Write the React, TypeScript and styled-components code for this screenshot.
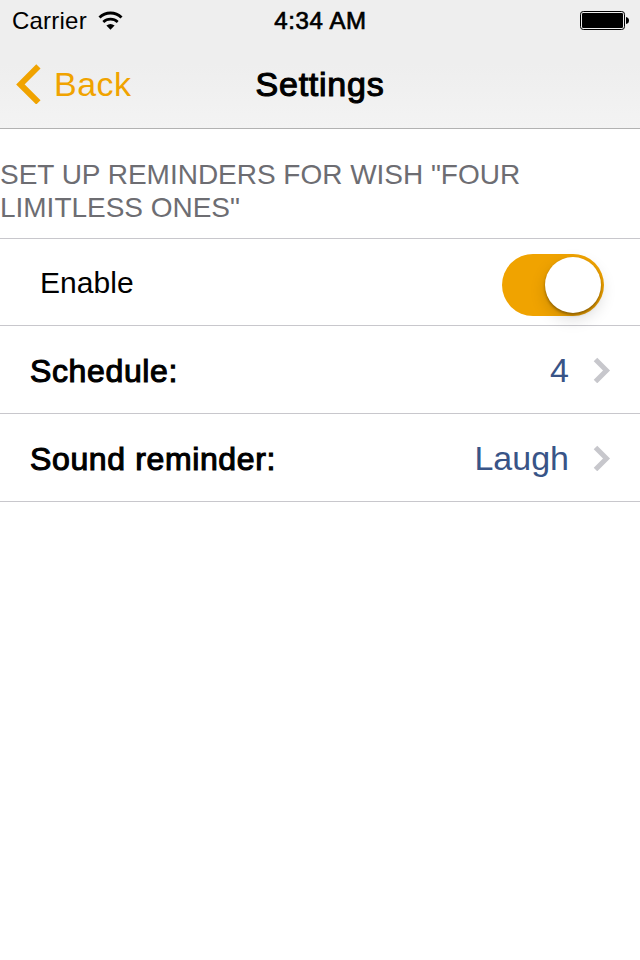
import React from "react";
import styled, { createGlobalStyle } from "styled-components";

const GlobalStyle = createGlobalStyle`
  * { box-sizing: border-box; }
  body {
    margin: 0;
    background: #fff;
    color: #000;
    font-family: "Liberation Sans", Arial, sans-serif;
  }
`;

const Screen = styled.main`
  width: 640px;
  height: 960px;
  background: #fff;
  overflow: hidden;
`;

const Header = styled.header`
  height: 129px;
  background: linear-gradient(#eeeeee 0%, #eeeeee 50%, #f3f3f3 100%);
  border-bottom: 1px solid #b2b2b2;
`;

const StatusBar = styled.div`
  display: grid;
  grid-template-columns: 1fr auto 1fr;
  align-items: center;
  height: 40px;
  padding: 1px 11px 0 12px;
  font-size: 24px;
  line-height: 40px;
`;

const Carrier = styled.div`
  display: flex;
  align-items: center;
  gap: 11px;
  letter-spacing: 0.22px;
`;

const Time = styled.time`
  letter-spacing: 0.6px;
  -webkit-text-stroke: 0.7px #000;
`;

const BatterySlot = styled.div`
  display: flex;
  justify-content: flex-end;
  padding-bottom: 2px;
`;

const NavBar = styled.nav`
  display: grid;
  grid-template-columns: 1fr auto 1fr;
  align-items: center;
  height: 88px;
  padding: 0 16px;
  font-size: 34px;
  line-height: 40px;
`;

const BackButton = styled.button`
  display: flex;
  align-items: center;
  gap: 13px;
  padding: 0;
  border: 0;
  background: none;
  color: #f0a300;
  font: inherit;
  letter-spacing: 0.45px;
`;

const Title = styled.h1`
  margin: 0;
  font: inherit;
  letter-spacing: 0.75px;
  -webkit-text-stroke: 1.1px #000;
`;

const SectionHeader = styled.h2`
  height: 110px;
  margin: 0;
  padding-top: 29px;
  border-bottom: 1px solid #c8c7cc;
  color: #6d6d72;
  font-size: 28px;
  font-weight: 400;
  line-height: 33px;
  letter-spacing: -0.02px;
  text-transform: uppercase;
`;

const Row = styled.div<{ $height: number }>`
  display: flex;
  align-items: center;
  justify-content: space-between;
  height: ${({ $height }) => $height}px;
  padding: 0 30px;
  border-bottom: 1px solid #c8c7cc;
`;

const OptionRow = styled(Row)`
  padding-right: 29px;
`;

const SwitchRow = styled(Row)`
  padding: 5px 36px 0 40px;
`;

const SwitchLabel = styled.span`
  margin-top: -3px;
  font-size: 30px;
  letter-spacing: 0.05px;
`;

const RowLabel = styled.span`
  padding-top: 3px;
  font-size: 32px;
  letter-spacing: 0.63px;
  -webkit-text-stroke: 1.1px #000;
`;

const RowValue = styled.span`
  display: flex;
  align-items: center;
  gap: 24px;
  padding-top: 1px;
  color: #385487;
  font-size: 34px;
`;

const Switch = styled.button`
  display: flex;
  justify-content: flex-end;
  width: 102px;
  height: 62px;
  padding: 3px;
  border: 0;
  border-radius: 31px;
  background: #f0a300;
`;

const Knob = styled.span`
  width: 56px;
  height: 56px;
  border-radius: 50%;
  background: #fff;
  box-shadow: 0 6px 16px rgba(0, 0, 0, 0.15), 0 2px 3px rgba(0, 0, 0, 0.35);
`;

const WifiIcon = () => (
  <svg width="25" height="20" viewBox="0 0 25 20" aria-hidden="true">
    <path d="M1.5 6.5A16 16 0 0 1 23.5 6.5" fill="none" stroke="#000" strokeWidth="3" />
    <path d="M5.3 10.9A10.6 10.6 0 0 1 19.7 10.9" fill="none" stroke="#000" strokeWidth="2.7" />
    <path d="M8.4 14.6Q12.5 11.2 16.6 14.6L12.5 18.7Z" />
  </svg>
);

const BatteryIcon = () => (
  <svg width="49" height="19" viewBox="0 0 49 19" aria-hidden="true">
    <rect x="0.5" y="0.5" width="44" height="18" rx="2.8" fill="none" stroke="#000" />
    <rect x="2" y="2" width="41" height="15" rx="1.2" />
    <path d="M46 6Q49 6.5 49 9.5T46 13Z" />
  </svg>
);

const BackIcon = () => (
  <svg width="25" height="40" viewBox="0 0 25 40" aria-hidden="true">
    <path d="M22.4 2.4L4.4 20.4L22.4 38.4" fill="none" stroke="#f0a300" strokeWidth="6" />
  </svg>
);

const Disclosure = () => (
  <svg width="18" height="26" viewBox="0 0 18 26" aria-hidden="true">
    <path d="M2.5 2.5L13.5 13.5L2.5 24.5" fill="none" stroke="#c7c7cc" strokeWidth="5" />
  </svg>
);

const options = [
  { label: "Schedule:", value: "4" },
  { label: "Sound reminder:", value: "Laugh" },
];

export default function App() {
  return (
    <>
      <GlobalStyle />
      <Screen>
        <Header>
          <StatusBar>
            <Carrier>
              <span>Carrier</span>
              <WifiIcon />
            </Carrier>
            <Time>4:34 AM</Time>
            <BatterySlot>
              <BatteryIcon />
            </BatterySlot>
          </StatusBar>
          <NavBar>
            <BackButton>
              <BackIcon />
              Back
            </BackButton>
            <Title>Settings</Title>
          </NavBar>
        </Header>
        <SectionHeader>Set up reminders for wish "Four Limitless Ones"</SectionHeader>
        <SwitchRow $height={87}>
          <SwitchLabel>Enable</SwitchLabel>
          <Switch role="switch" aria-checked="true" aria-label="Enable">
            <Knob />
          </Switch>
        </SwitchRow>
        {options.map(({ label, value }) => (
          <OptionRow key={label} $height={88}>
            <RowLabel>{label}</RowLabel>
            <RowValue>
              {value}
              <Disclosure />
            </RowValue>
          </OptionRow>
        ))}
      </Screen>
    </>
  );
}
